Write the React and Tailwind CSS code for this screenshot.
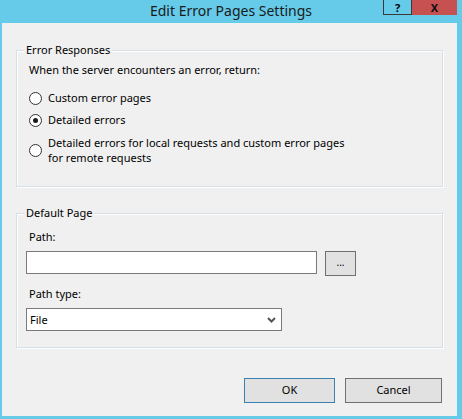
import React from "react";

function Radio({ checked }) {
  return (
    <span className="relative flex h-[13px] w-[13px] shrink-0 items-center justify-center rounded-full border border-[#333333] bg-white">
      {checked && <span className="h-[5px] w-[5px] rounded-full bg-[#1a1a1a]" />}
    </span>
  );
}

function GroupBox({ title, className, children }) {
  return (
    <div className={"relative border border-[#d5dfe5] shadow-[inset_1px_1px_0_#ffffff,1px_1px_0_#ffffff] " + className}>
      <span className="absolute left-[7px] top-[-9px] bg-[#f0f0f0] px-[2px] leading-[16px]">{title}</span>
      {children}
    </div>
  );
}

export default function App() {
  return (
    <div
      className="flex h-[419px] w-[462px] flex-col bg-[#65cbe9] text-[11px] text-black"
      style={{ fontFamily: '"Noto Sans", "Open Sans", sans-serif' }}
    >
      <div className="relative flex h-[23px] shrink-0 items-center justify-center">
        <span className="pb-[2px] text-[14px] leading-[20px] text-[#1a1a1a]">Edit Error Pages Settings</span>
        <div className="absolute right-[5px] top-0 flex">
          <div className="flex h-[15px] w-[29px] items-center justify-center border border-t-0 border-[#3a3a3a] text-[11px] font-bold leading-[15px]">?</div>
          <div className="flex h-[15px] w-[45px] items-center justify-center bg-[#c75050] text-[11px] font-bold leading-[15px] text-[#111]">X</div>
        </div>
      </div>
      <div className="mb-[3px] ml-[2px] mr-[5px] flex flex-1 flex-col bg-[#f0f0f0] px-[14px]">
        <GroupBox title="Error Responses" className="mt-[27px] h-[137px] pl-[12px]">
          <div className="mt-[11px] leading-[16px]">When the server encounters an error, return:</div>
          <div className="mt-[12px] flex items-center gap-[6px] leading-[16px]">
            <Radio />
            <span>Custom error pages</span>
          </div>
          <div className="mt-[6px] flex items-center gap-[6px] leading-[16px]">
            <Radio checked />
            <span>Detailed errors</span>
          </div>
          <div className="mt-[7px] flex items-center gap-[6px] leading-[15px]">
            <Radio />
            <span>
              Detailed errors for local requests and custom error pages
              <br />
              for remote requests
            </span>
          </div>
        </GroupBox>
        <GroupBox title="Default Page" className="mt-[26px] h-[135px] pl-[9px]">
          <div className="mt-[15px] pl-[3px] leading-[16px]">Path:</div>
          <div className="mt-[6px] flex items-start gap-[8px]">
            <div className="h-[23px] w-[291px] border border-[#7a7a7a] bg-white" />
            <div className="flex h-[25px] w-[31px] items-center justify-center border border-[#707070] bg-[#e1e1e1] pb-[3px] text-[10px] leading-none">...</div>
          </div>
          <div className="mt-[10px] pl-[3px] leading-[16px]">Path type:</div>
          <div className="mt-[6px] flex h-[23px] w-[256px] items-center justify-between border border-[#7a7a7a] bg-white pl-[3px] pr-[5px]">
            <span className="leading-[16px]">File</span>
            <svg width="9" height="6" viewBox="0 0 9 6">
              <path d="M1 1 L4.5 4.5 L8 1" stroke="#555" strokeWidth="2" fill="none" />
            </svg>
          </div>
        </GroupBox>
        <div className="mt-[30px] flex justify-end gap-[10px] pr-[1px]">
          <div className="flex h-[25px] w-[91px] items-center justify-center border border-[#3c7fb1] bg-[#e1e1e1]">OK</div>
          <div className="flex h-[25px] w-[97px] items-center justify-center border border-[#707070] bg-[#e1e1e1]">Cancel</div>
        </div>
      </div>
    </div>
  );
}
